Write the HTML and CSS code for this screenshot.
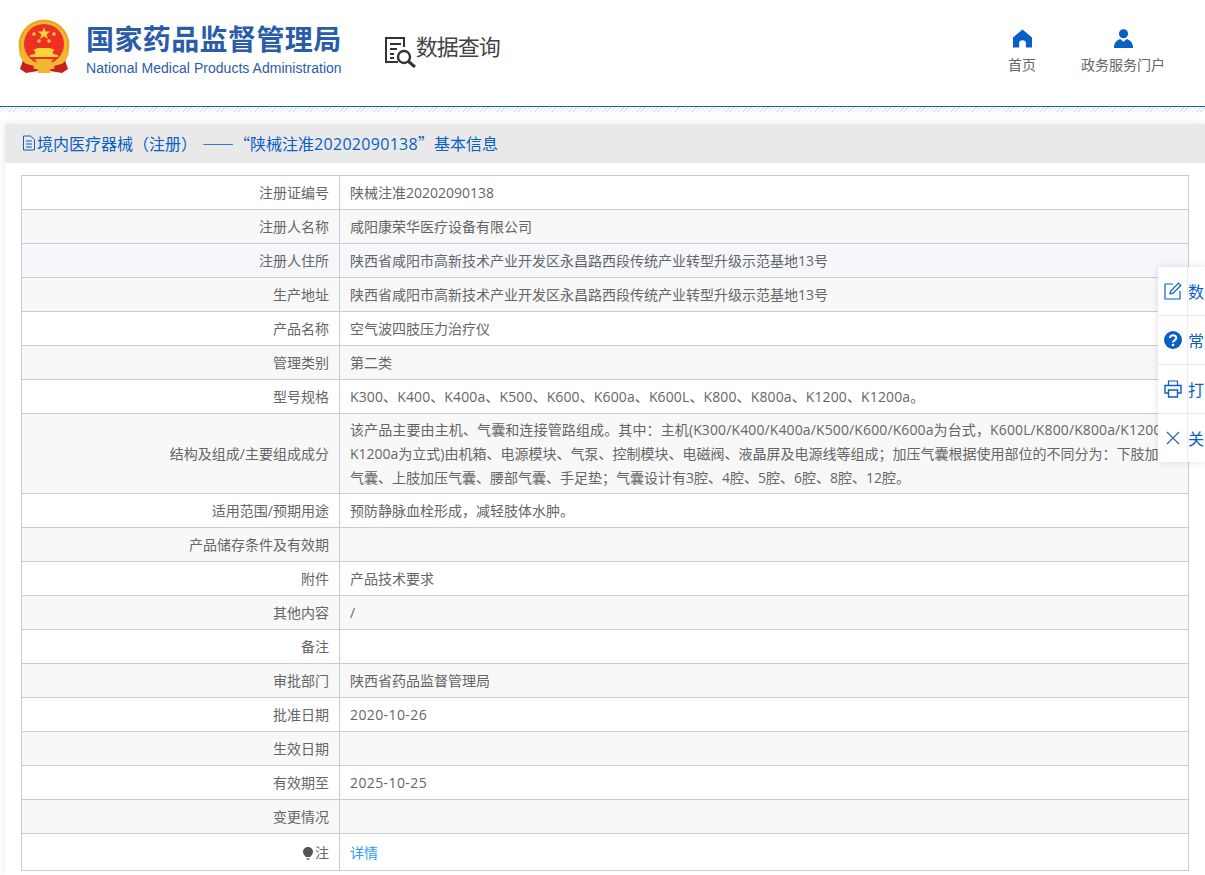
FILE: index.html

```html
<!DOCTYPE html>
<html lang="zh-CN">
<head>
    <meta charset="UTF-8">
    <title>数据查询</title>
    <link rel="stylesheet" href="styles.css">
</head>
<body>
    <div class="header">
        <svg class="emblem" viewBox="0 0 52 56">
            <path d="M6 38 L2 50 L8 54 L20 52 L26 49 L32 52 L44 54 L50 50 L46 38 Z" fill="#c9201c"/>
            <circle cx="26" cy="26" r="25.5" fill="#f2b632"/>
            <circle cx="26" cy="26" r="24" fill="none" stroke="#e09a20" stroke-width="1"/>
            <circle cx="26" cy="25" r="20" fill="#ee2f24"/>
            <polygon points="26,8 27.6,12.6 32.4,12.6 28.5,15.5 30,20 26,17.2 22,20 23.5,15.5 19.6,12.6 24.4,12.6" fill="#f8d33a"/>
            <circle cx="16" cy="15" r="1.7" fill="#f8d33a"/>
            <circle cx="36" cy="15" r="1.7" fill="#f8d33a"/>
            <circle cx="21" cy="22" r="1.7" fill="#f8d33a"/>
            <circle cx="31" cy="22" r="1.7" fill="#f8d33a"/>
            <path d="M12 38 H40 V36 L35 35 V32 L37 31 L32 29 H20 L15 31 L17 32 V35 L12 36 Z" fill="#f8d33a"/>
            <path d="M4 32 C8 44 18 47 26 47 C34 47 44 44 48 32 L51 34 C48 46 36 51 26 51 C16 51 4 46 1 34 Z" fill="#f2b632"/>
            <path d="M17 40 H35 L32 46 H20 Z" fill="#f2b632"/>
            <path d="M5 44 L16 47 L14 53 L7 53 Z M47 44 L36 47 L38 53 L45 53 Z" fill="#c9201c"/>
            <path d="M20 50 H32 V54 H20 Z" fill="#f2b632"/>
        </svg>
        <div class="brand">
            <div class="brand-cn">国家药品监督管理局</div>
            <div class="brand-en">National Medical Products Administration</div>
        </div>
        <div class="query">
            <svg class="query-icon" viewBox="0 0 32 32">
                <path d="M14 26 H2 V2 H20 V11" fill="none" stroke="#333" stroke-width="2"/>
                <path d="M6 8 H17 M6 13 H13 M6 18 H10 M6 22 H10" stroke="#333" stroke-width="2"/>
                <circle cx="20" cy="21" r="6" fill="none" stroke="#333" stroke-width="2.4"/>
                <path d="M24.5 25.5 L31 31" stroke="#333" stroke-width="3"/>
            </svg>
            <span>数据查询</span>
        </div>
        <div class="nav">
            <a class="nav-item">
                <svg viewBox="0 0 20 19">
                    <path d="M10 0 L20 8.5 V19 H13.5 V14 C13.5 10.5 6.5 10.5 6.5 14 V19 H0 V8.5 Z" fill="#0a5fc4"/>
                </svg>
                <span>首页</span>
            </a>
            <a class="nav-item nav-wide">
                <svg viewBox="0 0 20 20">
                    <circle cx="10" cy="5" r="4.8" fill="#0a5fc4"/>
                    <path d="M0 20 C0 14 3 12 6.5 10.5 L10 13.5 L13.5 10.5 C17 12 20 14 20 20 Z" fill="#0a5fc4"/>
                </svg>
                <span>政务服务门户</span>
            </a>
        </div>
    </div>
    <div class="hatch"></div>

    <div class="panel">
        <div class="panel-title">
            <svg class="doc-icon" viewBox="0 0 14 16">
                <path d="M1.5 1 H8.5 L12.5 4.5 V15 H1.5 Z" fill="none" stroke="#0a5fc4" stroke-width="1"/>
                <path d="M4 6 H10 M4 9 H10 M4 12 H10" stroke="#0a5fc4" stroke-width="1"/>
            </svg>
            <span>境内医疗器械（注册）<span class="dash">——</span>“陕械注准<span class="num">20202090138</span>”基本信息</span>
        </div>
        <table class="info">
            <tr><td class="label">注册证编号</td><td class="value">陕械注准20202090138</td></tr>
            <tr><td class="label">注册人名称</td><td class="value">咸阳康荣华医疗设备有限公司</td></tr>
            <tr class="hover"><td class="label">注册人住所</td><td class="value">陕西省咸阳市高新技术产业开发区永昌路西段传统产业转型升级示范基地13号</td></tr>
            <tr><td class="label">生产地址</td><td class="value">陕西省咸阳市高新技术产业开发区永昌路西段传统产业转型升级示范基地13号</td></tr>
            <tr><td class="label">产品名称</td><td class="value">空气波四肢压力治疗仪</td></tr>
            <tr><td class="label">管理类别</td><td class="value">第二类</td></tr>
            <tr><td class="label">型号规格</td><td class="value latin-model">K300、K400、K400a、K500、K600、K600a、K600L、K800、K800a、K1200、K1200a。</td></tr>
            <tr class="long"><td class="label">结构及组成/主要组成成分</td><td class="value"><span class="latin-model">该产品主要由主机、气囊和连接管路组成。其中：主机(K300/K400/K400a/K500/K600/K600a为台式，K600L/K800/K800a/K1200/</span><br>K1200a为立式)由机箱、电源模块、气泵、控制模块、电磁阀、液晶屏及电源线等组成；加压气囊根据使用部位的不同分为：下肢加压<br>气囊、上肢加压气囊、腰部气囊、手足垫；气囊设计有3腔、4腔、5腔、6腔、8腔、12腔。</td></tr>
            <tr><td class="label">适用范围/预期用途</td><td class="value">预防静脉血栓形成，减轻肢体水肿。</td></tr>
            <tr><td class="label">产品储存条件及有效期</td><td class="value"></td></tr>
            <tr><td class="label">附件</td><td class="value">产品技术要求</td></tr>
            <tr><td class="label">其他内容</td><td class="value">/</td></tr>
            <tr><td class="label">备注</td><td class="value"></td></tr>
            <tr><td class="label">审批部门</td><td class="value">陕西省药品监督管理局</td></tr>
            <tr><td class="label">批准日期</td><td class="value latin-date">2020-10-26</td></tr>
            <tr><td class="label">生效日期</td><td class="value"></td></tr>
            <tr><td class="label">有效期至</td><td class="value latin-date">2025-10-25</td></tr>
            <tr><td class="label">变更情况</td><td class="value"></td></tr>
            <tr class="last">
                <td class="label">
                    <svg class="bulb" viewBox="0 0 10 13">
                        <path d="M5 0 C8 0 10 2.2 10 5 C10 7 8.6 8 7.2 10 H2.8 C1.4 8 0 7 0 5 C0 2.2 2 0 5 0 Z" fill="#555"/>
                        <path d="M3.2 11 H6.8 L6 13 H4 Z" fill="#888"/>
                    </svg>注
                </td>
                <td class="value"><a class="link">详情</a></td>
            </tr>
        </table>
    </div>

    <div class="side">
        <div class="side-row">
            <span class="side-icon">
                <svg viewBox="0 0 18 18">
                    <path d="M9 2 H1 V17 H16 V9" fill="none" stroke="#0a5fc4" stroke-width="1.2"/>
                    <path d="M6 12 L6.8 9 L14.5 1.2 L16.8 3.5 L9 11.2 Z" fill="none" stroke="#0a5fc4" stroke-width="1.2"/>
                </svg>
            </span>
            <span class="side-text">数</span>
        </div>
        <div class="side-row">
            <span class="side-icon">
                <svg viewBox="0 0 18 18">
                    <circle cx="9" cy="9" r="9" fill="#0a5fc4"/>
                    <path d="M6 7 C6 3.2 12.2 3.2 12.2 7 C12.2 9.4 9 9.2 9 11.4" fill="none" stroke="#fff" stroke-width="2"/>
                    <circle cx="9" cy="14" r="1.3" fill="#fff"/>
                </svg>
            </span>
            <span class="side-text">常</span>
        </div>
        <div class="side-row">
            <span class="side-icon">
                <svg viewBox="0 0 18 18">
                    <path d="M4.5 5 V1 H13.5 V5" fill="none" stroke="#0a5fc4" stroke-width="1.2"/>
                    <path d="M4 13 H1 V5.5 H17 V13 H14" fill="none" stroke="#0a5fc4" stroke-width="1.4"/>
                    <path d="M4.5 10 H13.5 V17 H4.5 Z" fill="none" stroke="#0a5fc4" stroke-width="1.4"/>
                </svg>
            </span>
            <span class="side-text">打</span>
        </div>
        <div class="side-row">
            <span class="side-icon">
                <svg viewBox="0 0 18 18">
                    <path d="M3 3 L15 15 M15 3 L3 15" stroke="#2a5caa" stroke-width="1.1"/>
                </svg>
            </span>
            <span class="side-text">关</span>
        </div>
    </div>
</body>
</html>
```

FILE: styles.css

```css
html, body {
    margin: 0;
    padding: 0;
    height: 875px;
    overflow: hidden;
}
body {
    font-family: "Open Sans", "Noto Sans CJK SC", sans-serif;
    font-size: 14px;
    color: #666;
    background: #fff;
    position: relative;
}
.header {
    height: 107px;
    box-sizing: border-box;
    border-bottom: 1px solid #0a64c4;
    display: flex;
    align-items: flex-start;
    padding-left: 18px;
}
.emblem {
    width: 52px;
    height: 56px;
    margin-top: 19px;
}
.brand {
    margin-left: 16px;
    margin-top: 21px;
    color: #2a5caa;
    font-family: "Liberation Sans", "Noto Sans CJK SC", sans-serif;
}
.brand-cn {
    font-size: 28px;
    font-weight: 700;
    line-height: 40px;
    letter-spacing: 0.4px;
    white-space: nowrap;
}
.brand-en {
    font-size: 14px;
    line-height: 15px;
    letter-spacing: 0.03px;
    white-space: nowrap;
}
.query {
    margin-left: 42px;
    margin-top: 30px;
    display: flex;
    align-items: flex-start;
    font-size: 22px;
    line-height: 32px;
    letter-spacing: -1px;
    color: #444;
    white-space: nowrap;
}
.query-icon {
    width: 32px;
    height: 32px;
    margin-top: 6px;
}
.nav {
    margin-left: auto;
    margin-right: 40px;
    margin-top: 29px;
    display: flex;
}
.nav-item {
    width: 56px;
    display: flex;
    flex-direction: column;
    align-items: center;
    font-size: 14px;
    line-height: 18px;
    color: #666;
}
.nav-wide {
    width: 84px;
    margin-left: 31px;
}
.nav-item svg {
    width: 19px;
    height: 19px;
    margin-bottom: 8px;
}
.hatch {
    height: 5px;
    background: repeating-linear-gradient(135deg, #e2e2e2 0, #e2e2e2 1px, #fff 1px, #fff 3px);
}
.panel {
    margin: 12px 0 0 5px;
    box-shadow: 0 0 8px rgba(0, 0, 0, 0.1);
    padding-bottom: 4px;
}
.panel-title {
    height: 39px;
    box-sizing: border-box;
    padding: 0 0 2px 17px;
    background: #e9e9ea;
    font-family: "Noto Sans CJK SC", sans-serif;
    font-size: 16px;
    color: #0a5fc4;
    white-space: nowrap;
    display: flex;
    align-items: center;
}
.doc-icon {
    width: 14px;
    height: 16px;
    margin-right: 1px;
}
.dash {
    margin-left: 5px;
}
.num {
    font-family: "Open Sans", sans-serif;
    letter-spacing: 0.3px;
}
.info {
    width: 1168px;
    margin: 12px 0 0 16px;
    border-collapse: collapse;
    border: 1px solid #ccc;
    table-layout: fixed;
}
.info td {
    border: 1px solid #ccc;
    padding: 6px 10px;
    line-height: 21px;
    height: 21px;
}
.info .label {
    width: 297px;
    text-align: right;
    color: #666;
}
.info .value {
    color: #666;
    line-height: 24px;
    padding: 3px 10px;
}
.info .latin-date {
    letter-spacing: 0.4px;
}
.info .latin-model {
    letter-spacing: 0.12px;
}
.info tr:nth-child(even) td {
    background: #f8f8f8;
}
.info tr.hover td {
    background: #f5f7fc;
}
.info tr.long .value {
    padding: 3.5px 10px;
    white-space: nowrap;
}
.info tr.last .label {
    padding: 8px 10px 7px;
}
.info tr.last .value {
    padding: 7px 10px 5px;
}
.bulb {
    width: 10px;
    height: 13px;
    margin-right: 2px;
    vertical-align: -2px;
}
.link {
    color: #2d9bff;
}
.side {
    position: absolute;
    top: 267px;
    left: 1158px;
    width: 47px;
    overflow: hidden;
    background: #fff;
    box-shadow: 0 0 8px rgba(0, 0, 0, 0.12);
}
.side-row {
    height: 48px;
    display: flex;
    align-items: center;
    border-bottom: 1px solid #ebebf4;
}
.side-row:last-child {
    border-bottom: 0;
}
.side-icon {
    width: 29px;
    flex: none;
    display: flex;
    justify-content: center;
    align-items: center;
    height: 100%;
    border-right: 1px solid #ebebf4;
}
.side-icon svg {
    width: 18px;
    height: 18px;
}
.side-text {
    font-size: 16px;
    color: #0a5fc4;
    white-space: nowrap;
}
```
